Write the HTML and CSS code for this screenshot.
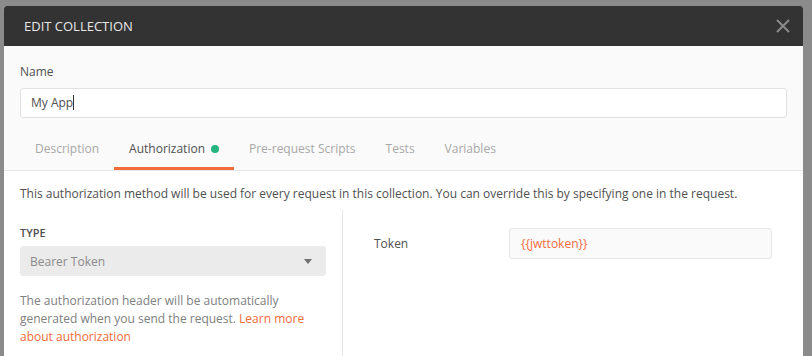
FILE: index.html
```html
<!DOCTYPE html>
<html lang="en">
<head>
  <meta charset="UTF-8" />
  <title>Edit Collection</title>
  <link rel="stylesheet" href="styles.css">
</head>
<body>

  <div class="modal">
    <!-- Header -->
    <div class="modal-header">
      <span class="modal-title">EDIT COLLECTION</span>
      <svg class="close" width="14" height="14" viewBox="0 0 14 14">
        <path d="M1 1 L13 13 M13 1 L1 13" stroke="#8a8a8a" stroke-width="2" fill="none"/>
      </svg>
    </div>

    <!-- Name + tabs -->
    <div class="modal-top">
      <label class="field-label">Name</label>
      <div class="name-input">My App<span class="caret"></span></div>

      <div class="tabs">
        <div class="tab">Description</div>
        <div class="tab active">Authorization <span class="dot"></span></div>
        <div class="tab">Pre-request Scripts</div>
        <div class="tab">Tests</div>
        <div class="tab">Variables</div>
      </div>
    </div>

    <!-- Auth body -->
    <div class="modal-body">
      <p class="intro">This authorization method will be used for every request in this collection. You can override this by specifying one in the request.</p>

      <div class="auth">
        <div class="auth-left">
          <div class="type-label">TYPE</div>
          <div class="select">
            <span>Bearer Token</span>
            <span class="arrow"></span>
          </div>
          <p class="help">The authorization header will be automatically generated when you send the request. <a href="#">Learn more about authorization</a></p>
        </div>
        <div class="auth-right">
          <div class="token-row">
            <span class="token-label">Token</span>
            <div class="token-input">{{jwttoken}}</div>
          </div>
        </div>
      </div>
    </div>
  </div>

</body>
</html>
```

FILE: styles.css
```css
* {
  margin: 0;
  padding: 0;
  box-sizing: border-box;
}

body {
  font-family: 'Open Sans', sans-serif;
  font-size: 12px;
  background: #8b8b8b;
  height: 356px;
  overflow: hidden;
  padding: 6px 9px 0 4px;
}

.modal {
  background: #fff;
  border-radius: 3px 3px 0 0;
  height: 350px;
  overflow: hidden;
}

.modal-header {
  background: #333;
  height: 40px;
  display: flex;
  align-items: center;
  justify-content: space-between;
  padding: 0 13px 0 20px;
}

.modal-title {
  color: #e8e8e8;
  font-size: 13px;
}

.modal-top {
  background: #fafafa;
  padding: 17px 16px 0 16px;
  border-bottom: 1px solid #e6e6e6;
}

.field-label {
  display: block;
  color: #505050;
  font-size: 12px;
  margin-bottom: 8px;
}

.name-input {
  height: 30px;
  background: #fff;
  border: 1px solid #e0e0e0;
  border-radius: 3px;
  padding: 0 10px;
  line-height: 28px;
  color: #505050;
  font-size: 12px;
}

.caret {
  display: inline-block;
  width: 1px;
  height: 15px;
  background: #333;
  vertical-align: middle;
  margin-top: -2px;
}

.tabs {
  display: flex;
  margin-top: 12px;
}

.tab {
  padding: 10px 15px 10px;
  color: #a8a8a8;
  font-size: 12px;
  border-bottom: 3px solid transparent;
  display: flex;
  align-items: center;
}

.tab.active {
  color: #505050;
  border-bottom-color: #f26b3a;
}

.dot {
  display: inline-block;
  width: 8px;
  height: 8px;
  border-radius: 50%;
  background: #26b47f;
  margin-left: 6px;
}

.modal-body {
  padding: 14px 16px 0;
}

.intro {
  color: #505050;
  font-size: 12px;
  line-height: 18px;
}

.auth {
  display: flex;
  margin-top: 7px;
}

.auth-left {
  width: 323px;
  padding-top: 15px;
  padding-right: 16px;
  border-right: 1px solid #e6e6e6;
  height: 200px;
}

.type-label {
  font-size: 11px;
  font-weight: 600;
  color: #505050;
  margin-bottom: 6px;
}

.select {
  height: 30px;
  background: #ebebeb;
  border-radius: 3px;
  display: flex;
  align-items: center;
  justify-content: space-between;
  padding: 0 10px;
  color: #8a8a8a;
  font-size: 12px;
}

.arrow {
  width: 0;
  height: 0;
  border-left: 4px solid transparent;
  border-right: 4px solid transparent;
  border-top: 5px solid #707070;
  margin-right: 4px;
}

.help {
  margin-top: 16px;
  color: #808080;
  font-size: 12px;
  line-height: 18px;
}

.help a {
  color: #f26b3a;
  text-decoration: none;
}

.auth-right {
  flex: 1;
  padding: 18px 14px 0 31px;
}

.token-row {
  display: flex;
  align-items: center;
}

.token-label {
  width: 135px;
  color: #505050;
  font-size: 12px;
}

.token-input {
  width: 263px;
  height: 31px;
  background: #fafafa;
  border: 1px solid #e6e6e6;
  border-radius: 3px;
  padding: 0 11px;
  line-height: 29px;
  color: #f26b3a;
  font-size: 12px;
}
```
